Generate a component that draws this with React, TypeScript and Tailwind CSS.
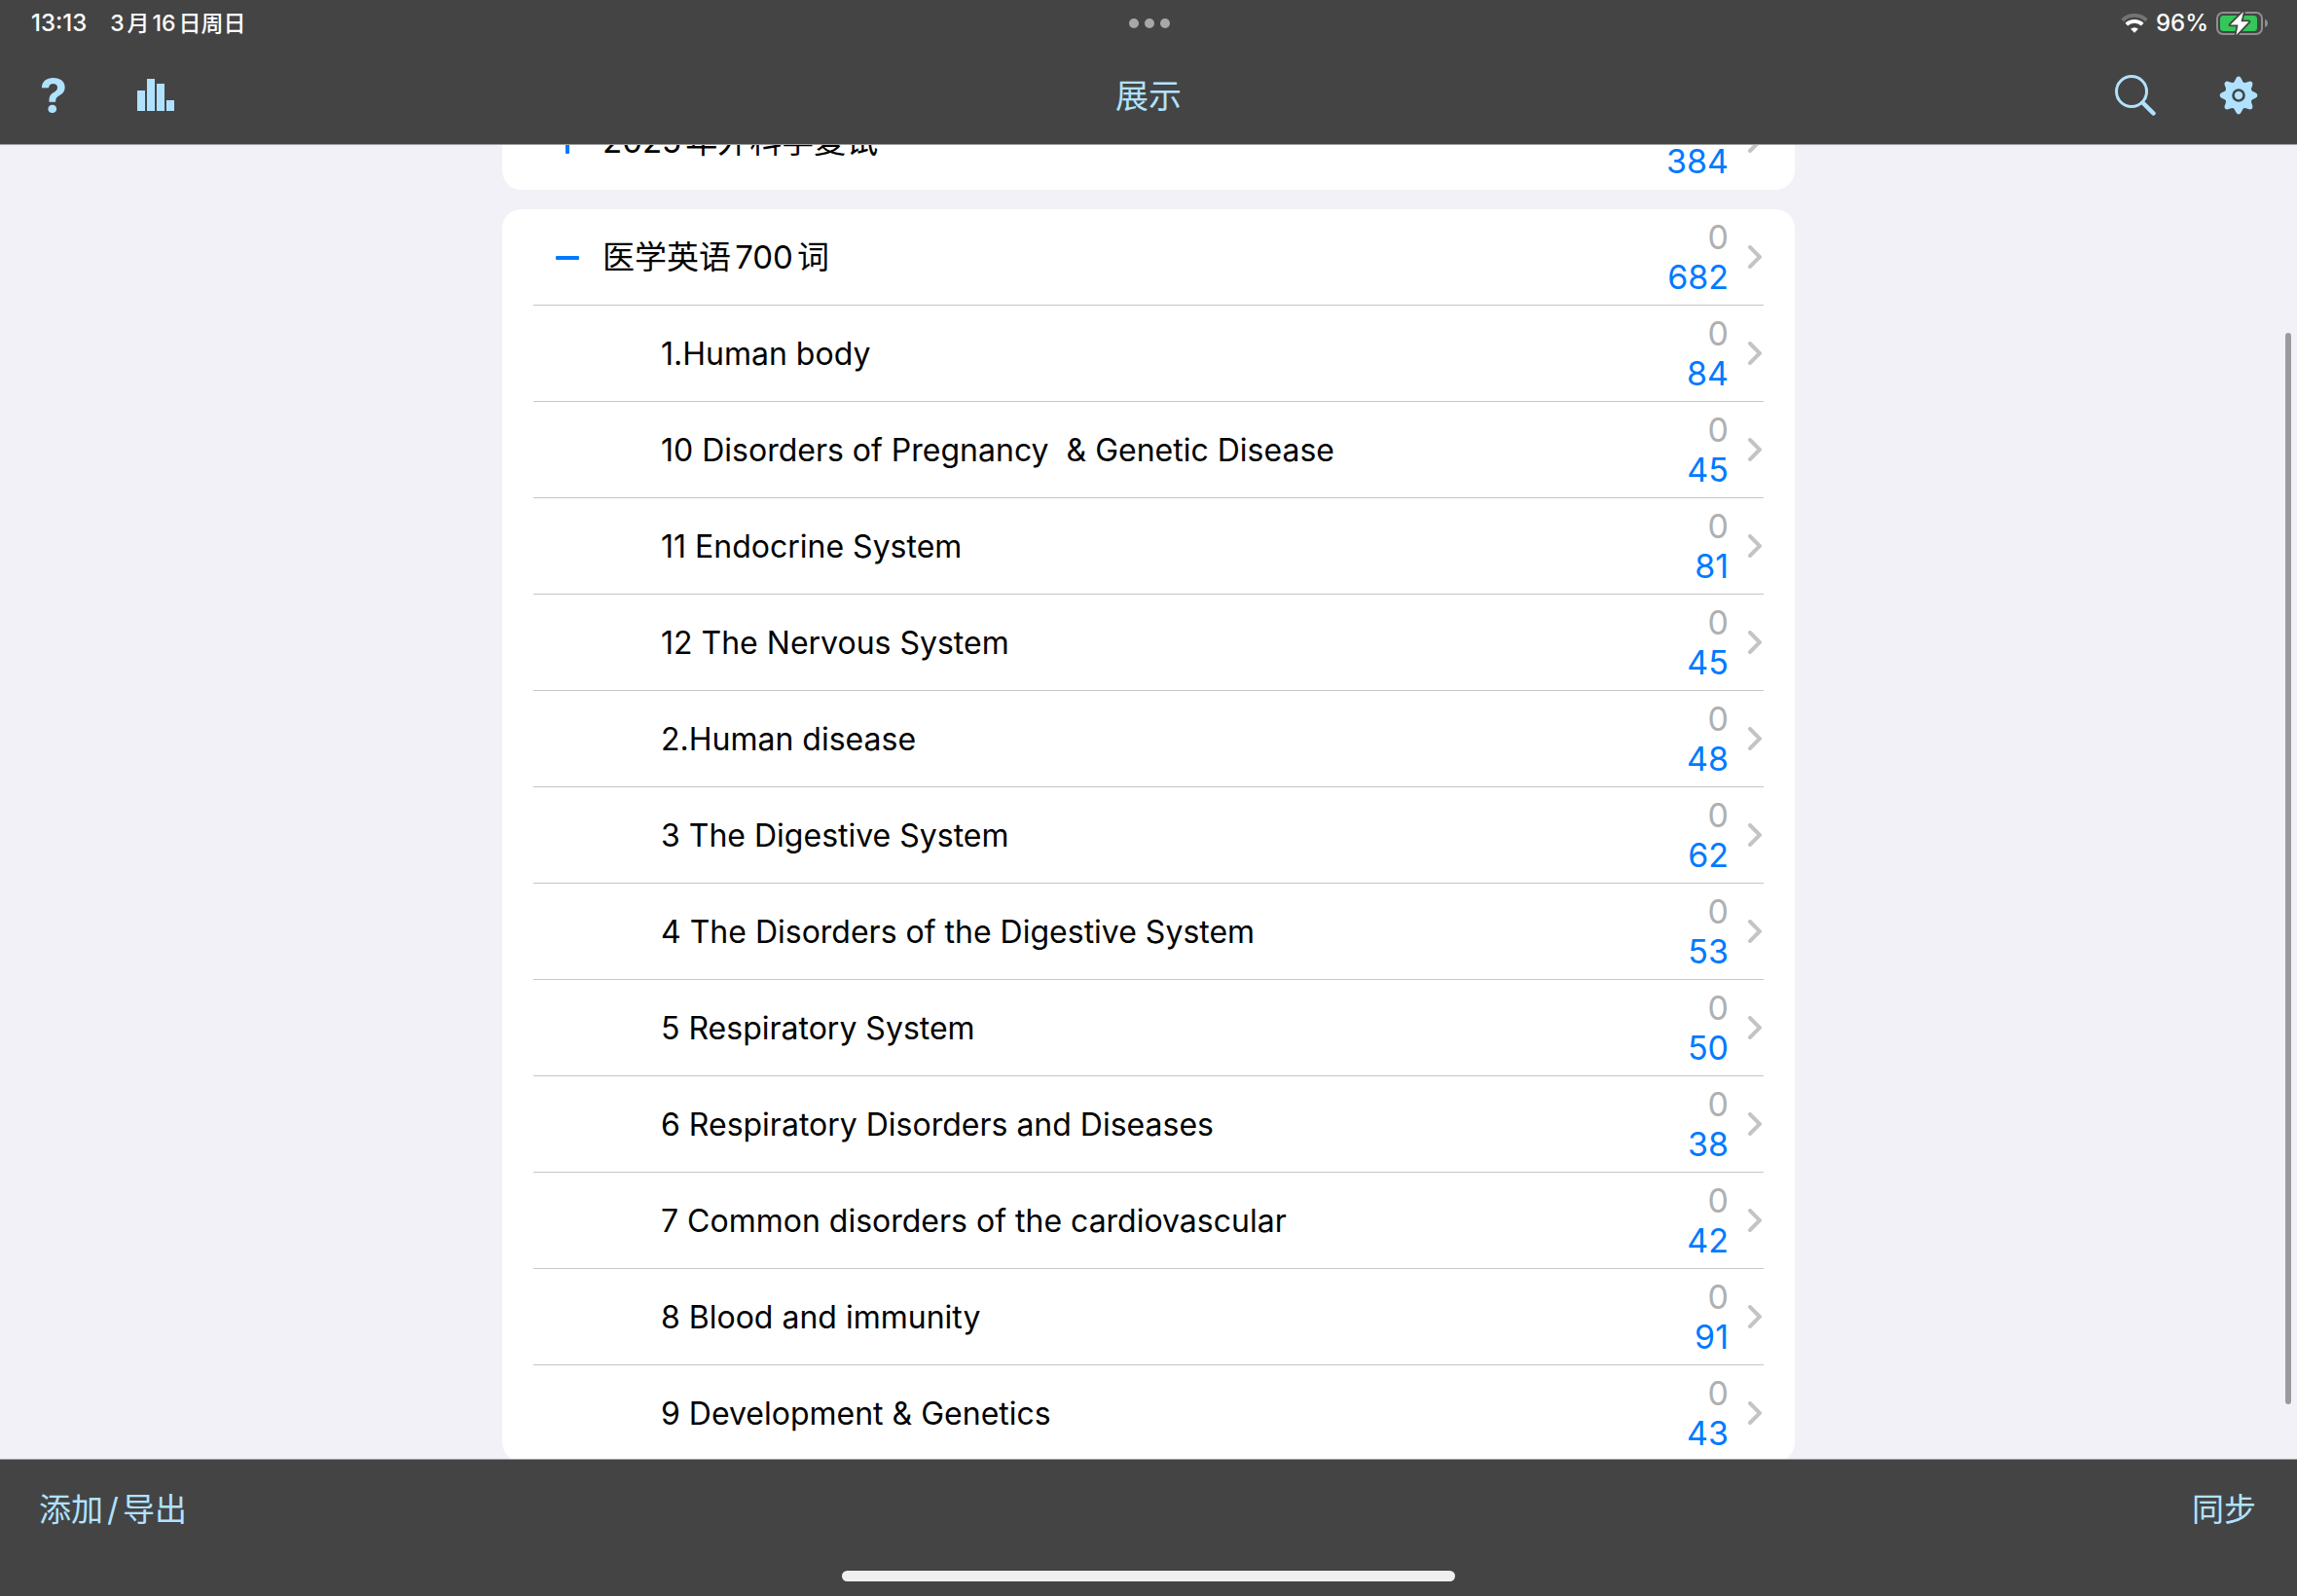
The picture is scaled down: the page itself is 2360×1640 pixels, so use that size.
import { useLayoutEffect, useRef, useState } from 'react';

interface Deck {
  id: string;
  name: string;
  due: number;
  total: number;
  children?: Deck[];
}

const decks: Deck[] = [
  { id: 'surgery', name: '2025年外科学复试', due: 0, total: 384 },
  {
    id: 'english',
    name: '医学英语700词',
    due: 0,
    total: 682,
    children: [
      { id: 'e1', name: '1.Human body', due: 0, total: 84 },
      { id: 'e10', name: '10 Disorders of Pregnancy  & Genetic Disease', due: 0, total: 45 },
      { id: 'e11', name: '11 Endocrine System', due: 0, total: 81 },
      { id: 'e12', name: '12 The Nervous System', due: 0, total: 45 },
      { id: 'e2', name: '2.Human disease', due: 0, total: 48 },
      { id: 'e3', name: '3 The Digestive System', due: 0, total: 62 },
      { id: 'e4', name: '4 The Disorders of the Digestive System', due: 0, total: 53 },
      { id: 'e5', name: '5 Respiratory System', due: 0, total: 50 },
      { id: 'e6', name: '6 Respiratory Disorders and Diseases', due: 0, total: 38 },
      { id: 'e7', name: '7 Common disorders of the cardiovascular', due: 0, total: 42 },
      { id: 'e8', name: '8 Blood and immunity', due: 0, total: 91 },
      { id: 'e9', name: '9 Development & Genetics', due: 0, total: 43 },
    ],
  },
];

function WifiIcon() {
  return (
    <svg width="28" height="20" viewBox="0 0 28 20" fill="none">
      <path d="M1.600 6.800a18 18 0 0 1 24.800 0" stroke="#747474" strokeWidth="3.800" />
      <path d="M5.800 11.200a12 12 0 0 1 16.400 0" stroke="#fff" strokeWidth="3.800" />
      <path d="M14 19.800l-3.900-4a5.600 5.600 0 0 1 7.800 0z" fill="#fff" />
    </svg>
  );
}

function BatteryIcon() {
  return (
    <svg width="54" height="26" viewBox="0 0 54 26" fill="none">
      <rect x="1" y="2" width="46" height="22" rx="6" stroke="#8f8f8f" strokeWidth="2" />
      <rect x="4" y="5" width="38" height="16" rx="3.500" fill="#34c759" />
      <path d="M50 9c2 .6 3 2.200 3 4s-1 3.400-3 4z" fill="#8f8f8f" />
      <path
        d="M28 1L14.500 14.500h8L20.500 25 33.500 11.200h-8z"
        fill="#fff"
        stroke="#444"
        strokeWidth="3.600"
        strokeLinejoin="round"
        paintOrder="stroke"
      />
    </svg>
  );
}

function BarsIcon() {
  return (
    <svg width="38" height="34" viewBox="0 0 38 34" fill="currentColor">
      <rect x="0" y="12" width="8" height="21" />
      <rect x="10" y="0" width="8" height="33" />
      <rect x="20" y="5" width="8" height="28" />
      <rect x="30" y="22" width="8" height="11" />
    </svg>
  );
}

function SearchIcon() {
  return (
    <svg width="42" height="42" viewBox="0 0 42 42" fill="none" stroke="currentColor">
      <circle cx="17" cy="17" r="15.500" strokeWidth="3" />
      <path d="M28.500 28.500L39.500 39.500" strokeWidth="4.500" strokeLinecap="round" />
    </svg>
  );
}

const toothAngles = [0, 45, 90, 135, 180, 225, 270, 315];

function GearIcon() {
  return (
    <svg width="40" height="40" viewBox="-20 -20 40 40" fill="currentColor">
      <circle r="14" />
      {toothAngles.map((angle) => (
        <path
          key={angle}
          transform={`rotate(${angle})`}
          d="M-6.500-12Q-3.800-14-2.900-17-2-19.400 0-19.400 2-19.400 2.900-17 3.800-14 6.500-12z"
        />
      ))}
      <circle r="5.500" fill="none" stroke="#444" strokeWidth="2.600" />
    </svg>
  );
}

function ToggleIcon({ open }: { open: boolean }) {
  return (
    <svg width="24" height="24" viewBox="0 0 24 24" fill="#007aff">
      <rect x="0" y="10" width="24" height="4" rx="1" />
      {!open && <rect x="10" y="0" width="4" height="24" rx="1" />}
    </svg>
  );
}

function DeckRow({ deck, nested = false, open = false, last = false, onToggle }: {
  deck: Deck;
  nested?: boolean;
  open?: boolean;
  last?: boolean;
  onToggle?: () => void;
}) {
  return (
    <li className={`mx-8 flex h-[99px] items-center border-b ${last ? 'border-transparent' : 'border-[#c6c6c8]'}`}>
      {nested ? (
        <span className="w-[131px] shrink-0" />
      ) : (
        <button
          onClick={onToggle}
          aria-label={open ? '收起' : '展开'}
          className="flex h-full w-[71px] shrink-0 items-center pt-0.5 pl-[23px]"
        >
          <ToggleIcon open={open} />
        </button>
      )}
      <button className="flex h-full flex-1 items-center justify-between text-left">
        <span
          className={`whitespace-pre text-black [text-autospace:normal] ${nested ? 'pt-0.5 text-[32px] leading-10' : 'text-[33px] leading-10'}`}
        >
          {deck.name}
        </span>
        <span className="flex items-center gap-5 pr-0.5">
          <span className="flex flex-col text-right text-[34px] leading-[41px]">
            <span className="text-[#b0b0b0]">{deck.due}</span>
            <span className="text-[#007aff]">{deck.total}</span>
          </span>
          <svg width="14" height="24" viewBox="0 0 14 24" fill="none" stroke="#c4c4c7" strokeWidth="4">
            <path d="M2 2l10 10L2 22" strokeLinecap="round" strokeLinejoin="miter" />
          </svg>
        </span>
      </button>
    </li>
  );
}

export default function App() {
  const [expanded, setExpanded] = useState<string[]>(['english']);
  const listRef = useRef<HTMLDivElement>(null);

  // open slightly scrolled, on the expanded deck
  useLayoutEffect(() => {
    if (listRef.current) listRef.current.scrollTop = 73;
  }, []);

  const toggle = (id: string) => {
    setExpanded((ids) => (ids.includes(id) ? ids.filter((i) => i !== id) : [...ids, id]));
  };

  return (
    <div className="flex h-screen flex-col bg-[#f2f1f7] font-['Inter','Noto_Sans_CJK_SC',sans-serif]">
      <header className="shrink-0 border-b border-[#a0a0a0] bg-[#444444]">
        <div className="grid h-12 grid-cols-3 items-center pr-[29px] pl-8 text-[24px] leading-8 font-medium text-white">
          <div className="flex items-center gap-6">
            <span>13:13</span>
            <span className="text-[23px] [text-autospace:normal]">3月16日周日</span>
          </div>
          <div className="flex justify-center gap-1.5">
            <span className="size-2.5 rounded-full bg-[#a8a8a8]" />
            <span className="size-2.5 rounded-full bg-[#a8a8a8]" />
            <span className="size-2.5 rounded-full bg-[#a8a8a8]" />
          </div>
          <div className="flex items-center justify-end gap-2">
            <WifiIcon />
            <span>96%</span>
            <BatteryIcon />
          </div>
        </div>
        <div className="grid h-[100px] grid-cols-3 items-center text-[#b0e2ff]">
          <div className="flex items-center gap-[72px] pl-[41px]">
            <button aria-label="帮助" className="w-7 text-[50px] leading-[60px] font-bold">?</button>
            <button aria-label="统计"><BarsIcon /></button>
          </div>
          <h1 className="pt-0.5 text-center text-[34px] leading-10">展示</h1>
          <div className="flex items-center justify-end gap-[65px] pr-10">
            <button aria-label="搜索"><SearchIcon /></button>
            <button aria-label="设置"><GearIcon /></button>
          </div>
        </div>
      </header>

      <main className="relative min-h-0 flex-1">
        <div ref={listRef} className="flex h-full flex-col gap-5 overflow-y-auto py-5 [scrollbar-width:none]">
          {decks.map((deck) => {
            const open = expanded.includes(deck.id);
            const children = open && deck.children ? deck.children : [];
            return (
              <ul key={deck.id} className="mx-auto w-full max-w-[1328px] shrink-0 rounded-[20px] bg-white">
                <DeckRow deck={deck} open={open} last={children.length === 0} onToggle={() => toggle(deck.id)} />
                {children.map((child, i) => (
                  <DeckRow key={child.id} deck={child} nested last={i === children.length - 1} />
                ))}
              </ul>
            );
          })}
        </div>
        <div className="absolute top-[193px] right-1.5 bottom-14 w-1.5 rounded-full bg-[#9b9b9d]" />
      </main>

      <footer className="flex h-[141px] shrink-0 flex-col items-center justify-between border-t border-[#a0a0a0] bg-[#444444] pb-[15px]">
        <div className="flex h-[102px] w-full items-center justify-between pr-[42px] pl-10 text-[33px] leading-10 text-[#b0e2ff]">
          <button>添加<span className="mx-1">/</span>导出</button>
          <button>同步</button>
        </div>
        <div className="h-[11px] w-[630px] rounded-full bg-[#efefef]" />
      </footer>
    </div>
  );
}
